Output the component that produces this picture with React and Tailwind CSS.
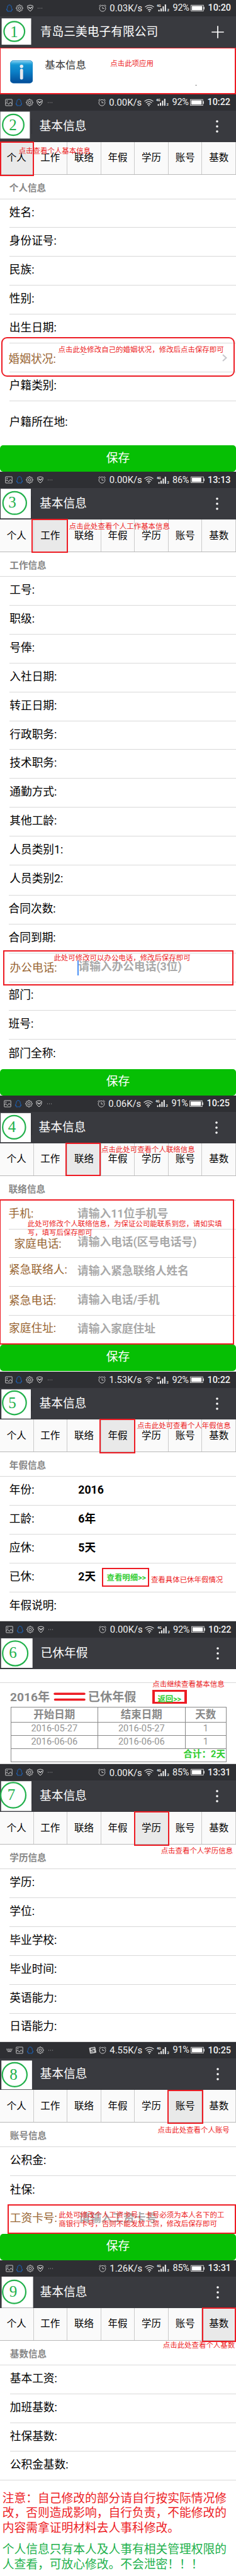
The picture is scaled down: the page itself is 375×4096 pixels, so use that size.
import React from "react";

const TABS = ["个人", "工作", "联络", "年假", "学历", "账号", "基数"];
const SERIF = "font-['Liberation_Serif','Noto_Sans_CJK_SC',serif]";

/* ---------- status bar icons ---------- */

function PictureIcon() {
  return (
    <svg className="h-3 w-3 shrink-0" viewBox="0 0 12 12" fill="none" stroke="#e8e8e8" strokeWidth="0.8">
      <rect x="0.8" y="1" width="10.4" height="10" rx="0.4" />
      <circle cx="3.4" cy="3.6" r="0.7" fill="#e8e8e8" strokeWidth="0.3" />
      <path d="M1 7.6 3.2 6l2.6 3 2.6-3.6L11 8.4" />
    </svg>
  );
}

function PenguinIcon() {
  return (
    <svg className="h-3 w-3 shrink-0" viewBox="0 0 12 12" fill="none" stroke="#1673e6" strokeWidth="0.8" strokeLinejoin="round">
      <path d="M6 .9C4 .9 2.9 2.3 2.9 4.2c0 1.2-.2 1.6-.9 2.7-.6 1-.7 1.9-.5 2.2.3.2.8-.4 1-.6.1.7.4 1.200.8 1.500-.5.2-.8.5-.7.8.2.4 2 .4 2.900 0h1c.9.4 2.700.4 2.900 0 .1-.3-.2-.6-.7-.8.4-.3.7-.8.8-1.500.2.2.7.8 1 .6.2-.3.1-1.200-.5-2.200-.7-1.100-.9-1.500-.9-2.700C9.100 2.300 8 .9 6 .9Z" />
    </svg>
  );
}

function GearIcon() {
  return (
    <svg className="h-3 w-3 shrink-0" viewBox="0 0 24 24" fill="none" stroke="#e8e8e8" strokeWidth="1.6" strokeLinejoin="round">
      <circle cx="12" cy="12" r="4" />
      <path d="M10.400 1.500h3.200l.5 2.600 2 .8 2.200-1.500 2.300 2.300-1.500 2.200.8 2 2.600.5v3.200l-2.600.5-.8 2 1.500 2.200-2.300 2.300-2.200-1.500-2 .8-.5 2.600h-3.200l-.5-2.600-2-.8-2.200 1.500-2.300-2.300 1.500-2.200-.8-2-2.600-.5v-3.200l2.600-.5.8-2-1.500-2.200 2.300-2.300 2.200 1.500 2-.8Z" />
    </svg>
  );
}

function ShieldIcon() {
  return (
    <svg className="h-3 w-3 shrink-0" viewBox="0 0 12 12" fill="none" stroke="#e8e8e8" strokeWidth="0.9" strokeLinejoin="round">
      <path d="M6 1.200c1.500 0 3 .4 4.300 1.100.2 3.600-1.100 6.600-4.300 8.500C2.800 8.900 1.500 5.900 1.700 2.300 3 1.600 4.500 1.200 6 1.200Z" />
      <path d="M3.400 4 6 6.600 8.800 4" strokeWidth="1.200" />
    </svg>
  );
}

function KeyboardIcon() {
  return (
    <svg className="h-3 w-3 shrink-0" viewBox="0 0 12 12" fill="none" stroke="#e8e8e8" strokeWidth="1">
      <path d="M1.200 4.200h9.600M1.600 6h8.800" strokeDasharray="1 .5" />
      <path d="M3 7.900h6" />
    </svg>
  );
}

function DotsIcon() {
  return (
    <svg className="h-3 w-3 shrink-0" viewBox="0 0 12 12" fill="#d8d8d8">
      <circle cx="2.600" cy="6" r="0.500" />
      <circle cx="5.600" cy="6" r="0.500" />
      <circle cx="8.600" cy="6" r="0.500" />
    </svg>
  );
}

function InputMethodIcon() {
  return (
    <svg className="mr-1 h-3 w-3 shrink-0" viewBox="0 0 12 12">
      <path d="M1 2.500 9.800 1 11.500 9.500 2.500 11Z" fill="#d5d5d5" stroke="#d5d5d5" strokeLinejoin="round" />
      <path d="M9.200 3.200C6.500 2.600 3.600 3 3.700 4.600c.1 1.500 4.800.8 4.900 2.400.1 1.600-2.800 2-5.400 1.500" fill="none" stroke="#2e2f33" strokeWidth="1.300" />
    </svg>
  );
}

function AlarmIcon() {
  return (
    <svg className="h-3 w-3 shrink-0" viewBox="0 0 12 12" fill="none" stroke="#e8e8e8" strokeWidth="0.8">
      <circle cx="6" cy="6.300" r="4.900" />
      <path d="M6 3.500v3h2.600M.5 2.900Q1.200 1.200 2.900.7M11.500 2.900Q10.800 1.200 9.100.7" />
    </svg>
  );
}

function WifiIcon() {
  return (
    <svg className="h-3 w-[15px] shrink-0" viewBox="0 0 15 12" fill="none" stroke="#f2f2f2" strokeWidth="1.100">
      <path d="M.5 4.200Q7.500-1.800 14.500 4.200M2.700 6.600Q7.500 2.300 12.300 6.600M4.900 9Q7.500 6.600 10.100 9" />
      <circle cx="7.500" cy="10.700" r="1" fill="#f2f2f2" stroke="none" />
    </svg>
  );
}

function SignalIcon() {
  return (
    <svg className="h-[13px] w-5 shrink-0" viewBox="0 0 20 13" fill="#f2f2f2">
      <text x="0" y="5.200" fontSize="5.400" fontWeight="700" fontFamily="Roboto">4G</text>
      <rect x="2.600" y="9.600" width="2" height="2.600" rx=".6" />
      <rect x="6" y="7.200" width="2" height="5" rx=".6" />
      <rect x="9.400" y="4" width="2" height="8.200" rx=".6" />
      <rect x="12.800" y="1" width="2" height="11.200" rx=".6" />
      <text x="16.400" y="12.300" fontSize="5.800" fontWeight="700" fontFamily="Roboto">2</text>
    </svg>
  );
}

function BatteryIcon({ low }) {
  return (
    <svg className="h-3 w-[22px] shrink-0" viewBox="0 0 22 12">
      <rect x=".6" y="1.200" width="19.600" height="9.400" fill="none" stroke="#f2f2f2" strokeWidth=".8" />
      <rect x="1.900" y="2.500" width={low ? 15 : 16.400} height="6.800" fill="#fff" />
      <rect x="20.300" y="3.800" width="1.500" height="4.200" fill="#f2f2f2" />
    </svg>
  );
}

const LEFT_ICONS = {
  picture: PictureIcon,
  penguin: PenguinIcon,
  gear: GearIcon,
  shield: ShieldIcon,
  keyboard: KeyboardIcon,
  dots: DotsIcon,
};
const DEFAULT_ICONS = ["picture", "penguin", "gear", "shield", "dots"];

function StatusBar({ speed, battery, time, icons = DEFAULT_ICONS, left = "pl-[7.500px]", right = "pr-[8.800px]", ime }) {
  return (
    <div className={`flex h-[26px] shrink-0 items-center justify-between bg-[#2e2f33] text-[#f2f2f2] ${left} ${right}`}>
      <div className="flex items-center gap-[4.600px]">
        {icons.map((name) => {
          const Icon = LEFT_ICONS[name];
          return <Icon key={name} />;
        })}
      </div>
      <div className="flex items-center font-[Roboto,sans-serif] leading-none">
        {ime && <InputMethodIcon />}
        <AlarmIcon />
        <span className="ml-[5.500px] mt-px w-[51.500px] whitespace-nowrap text-[14.800px]">{speed}</span>
        <span className="ml-[3.700px] flex">
          <WifiIcon />
        </span>
        <span className="ml-[4.600px] flex">
          <SignalIcon />
        </span>
        <span className="ml-[5.500px] mt-px w-[26.500px] whitespace-nowrap text-[14.500px] tracking-[-0.300px]">{battery}%</span>
        <span className="ml-[2px] flex">
          <BatteryIcon low={battery < 90} />
        </span>
        <span className="ml-[5.400px] mt-px w-[36px] whitespace-nowrap text-[14.400px] font-medium">{time}</span>
      </div>
    </div>
  );
}

/* ---------- shared building blocks ---------- */

function Badge({ n, box, ring, digit }) {
  return (
    <svg className="absolute left-0 top-0 h-[51px] w-[56px]" viewBox="0 0 56 51">
      <rect x={box[0]} y={box[1]} width={box[2] - box[0]} height={box[3] - box[1]} fill="#fff" />
      <ellipse
        cx={(ring[0] + ring[2]) / 2}
        cy={(ring[1] + ring[3]) / 2}
        rx={(ring[2] - ring[0]) / 2 - 1.1}
        ry={(ring[3] - ring[1]) / 2 - 1.1}
        fill="none"
        stroke="#22b14c"
        strokeWidth="2.200"
      />
      <text x={digit[0]} y={digit[1] + 8.2} textAnchor="middle" fontSize="25" fontFamily="Liberation Serif" fill="#22b14c">
        {n}
      </text>
    </svg>
  );
}

function Header({ title, badge, plus, indent = "pl-[62.500px]", pad = "pr-[24.500px]" }) {
  return (
    <div className={`relative flex h-[50px] shrink-0 items-center justify-between bg-[#393a3f] ${indent} ${pad}`}>
      <span className="absolute left-[49.500px] top-[13px] h-6 w-px bg-[#303136]" />
      <Badge {...badge} />
      <h1 className="whitespace-nowrap text-[18.750px] leading-6 text-white">{title}</h1>
      {plus ? (
        <svg className="h-5 w-5" viewBox="0 0 20 20" stroke="#fff" strokeWidth="1.700">
          <path d="M10 .3v19.400M.3 10h19.400" />
        </svg>
      ) : (
        <svg className="h-6 w-3" viewBox="0 0 12 24" fill="#fff">
          <circle cx="6" cy="4" r="1.800" />
          <circle cx="6" cy="12" r="1.800" />
          <circle cx="6" cy="20" r="1.800" />
        </svg>
      )}
    </div>
  );
}

function Tabs({ active, mark }) {
  return (
    <nav className="relative grid h-[52px] shrink-0 grid-cols-7 border-b border-[#b9b9b9]">
      {TABS.map((t) => (
        <span
          key={t}
          className={`flex items-center justify-center whitespace-nowrap border-r border-[#cbcbcb] text-[15.500px] leading-5 text-black last:border-r-0 ${
            t === active ? "bg-[#e9e9e9]" : "bg-[#fafafa]"
          }`}
        >
          {t}
        </span>
      ))}
      <span className={`absolute border-[2.300px] border-[#ed1c24] ${mark}`} />
    </nav>
  );
}

function SectionTitle({ children, pad = "pl-[14.800px]" }) {
  return (
    <h2 className={`flex h-[39px] shrink-0 items-center border-b border-[#d9d9d9] pt-1 text-[14.600px] font-bold leading-5 text-[#888] ${pad}`}>
      {children}
    </h2>
  );
}

function Row({ label, shift = "", tone = "text-black", value, hint, height = "h-[45.850px]", indent = "ml-[14.800px]", line = true, children }) {
  return (
    <div className={`relative flex shrink-0 items-center pb-[3px] ${line ? "border-b border-[#d9d9d9]" : ""} ${height} ${indent}`}>
      <span className={`w-[109.500px] shrink-0 whitespace-nowrap text-[17.700px] leading-6 ${tone} ${shift}`}>{label}:</span>
      {value && <span className="whitespace-nowrap text-[17.700px] font-bold leading-6 text-black">{value}</span>}
      {hint && <span className="whitespace-nowrap text-[17.700px] font-bold leading-6 text-[#a9a9a9]">{hint}</span>}
      {children}
    </div>
  );
}

function SaveButton() {
  return (
    <button className="h-[42px] w-full shrink-0 rounded-[5px] bg-[#06bf04] text-center text-[18.750px] leading-[39px] text-white">
      保存
    </button>
  );
}

function Note({ at, children }) {
  return (
    <p className={`absolute z-10 whitespace-nowrap text-[11.450px] leading-[14px] text-[#ed1c24] ${SERIF} ${at}`}>{children}</p>
  );
}

function Frame({ at }) {
  return <span className={`absolute border-[2.300px] border-[#ed1c24] ${at}`} />;
}

const BROWN = "text-[#996633]";

/* ---------- screens ---------- */

function AppEntryScreen() {
  return (
    <section className="relative flex h-[149.600px] flex-col">
      <StatusBar speed="0.03K/s" battery={92} time="10:20" icons={["penguin", "gear", "shield", "dots"]} left="pl-[8.500px]" right="pr-[8.500px]" />
      <Header
        title="青岛三美电子有限公司"
        plus
        indent="pl-[63.700px]"
        pad="pr-[19.200px]"
        badge={{ n: 1, box: [2.6, 3.2, 49.5, 45.1], ring: [5.3, 7.3, 40.2, 40.8], digit: [22.5, 24.3] }}
      />
      <div className="-mt-[1.500px] flex flex-1 items-start border-[2.400px] border-l-[1.800px] border-[#ed1c24] bg-white pl-[14.500px] pt-[19.500px]">
        <svg className="h-[36.500px] w-[36.500px]" viewBox="0 0 36 36">
          <defs>
            <linearGradient id="tile" x1="0" y1="0" x2="0" y2="1">
              <stop offset="0" stopColor="#1ba3dc" />
              <stop offset=".5" stopColor="#0b7fc6" />
              <stop offset="1" stopColor="#034c98" />
            </linearGradient>
            <linearGradient id="gloss" x1="0" y1="0" x2="0" y2="1">
              <stop offset="0" stopColor="#8fd3f2" />
              <stop offset="1" stopColor="#1ba0da" stopOpacity="0" />
            </linearGradient>
          </defs>
          <rect x=".3" y=".3" width="35.400" height="35.400" rx="5" fill="url(#tile)" stroke="#0c70b4" strokeWidth=".5" />
          <path d="M1.200 8V5a4 4 0 0 1 4-4h25.600a4 4 0 0 1 4 4v3Q18 5 1.200 8Z" fill="url(#gloss)" />
          <circle cx="18" cy="9.400" r="2.700" fill="#e9eef2" />
          <rect x="15.600" y="13" width="4.800" height="17.200" rx="2.300" fill="#e4e8ee" />
        </svg>
        <span className="ml-[19.300px] mt-[-4.500px] whitespace-nowrap text-[16.400px] leading-6 text-[#333]">基本信息</span>
      </div>
      <Note at="left-[175.300px] top-[93.500px]">点击此项应用</Note>
      <span className="absolute left-[311px] top-[135px] h-px w-px bg-black" />
    </section>
  );
}

function PersonalScreen() {
  return (
    <section className="relative flex h-[600.800px] flex-col">
      <StatusBar speed="0.00K/s" battery={92} time="10:22" right="pr-[9.500px]" />
      <Header title="基本信息" badge={{ n: 2, box: [0.5, 1.5, 47.4, 44.3], ring: [3.1, 4.8, 39, 40.3], digit: [20.6, 22.5] }} />
      <Tabs active="个人" mark="-top-px left-0 h-[55px] w-[53.600px]" />
      <SectionTitle>个人信息</SectionTitle>
      <Row label="姓名" />
      <Row label="身份证号" />
      <Row label="民族" />
      <Row label="性别" />
      <Row label="出生日期" />
      <Row label="婚姻状况" tone={BROWN} shift="relative -left-[1.200px] top-[4px]">
        <svg className="absolute right-[14px] top-[17px] h-3 w-2" viewBox="0 0 8 12" fill="none" stroke="#c7c7cc" strokeWidth="2">
          <path d="M1 1 6.500 6 1 11" />
        </svg>
      </Row>
      <Row label="户籍类别" />
      <Row label="户籍所在地" height="h-[70.800px]" line={false} />
      <SaveButton />
      <Frame at="left-[2.200px] top-[386.700px] h-[62.500px] w-[370.400px] rounded-[9px]" />
      <Note at="left-[29.700px] top-[83.400px]">点击查看个人基本信息</Note>
      <Note at="left-[92.600px] top-[399.400px]">点击此处修改自己的婚姻状况，修改后点击保存即可</Note>
      <span className="absolute left-[130px] top-[413px] h-px w-[3.500px] bg-[#999]" />
    </section>
  );
}

function WorkScreen() {
  const shifted = "ml-[13.600px]";
  return (
    <section className="relative flex h-[991.300px] flex-col">
      <StatusBar speed="0.00K/s" battery={86} time="13:13" left="pl-[8px]" right="pr-[9px]" />
      <Header title="基本信息" indent="pl-[63px]" pad="pr-[24px]" badge={{ n: 3, box: [1, 1.2, 49, 48.2], ring: [3.6, 4.8, 43, 42.8], digit: [19.6, 23.2] }} />
      <Tabs active="工作" mark="-top-px left-[49.500px] h-[54px] w-[58.800px]" />
      <SectionTitle pad="pl-[15.300px]">工作信息</SectionTitle>
      {["工号", "职级", "号俸", "入社日期", "转正日期", "行政职务", "技术职务", "通勤方式", "其他工龄", "人员类别1"].map((l) => (
        <Row key={l} label={l} indent="ml-[15.300px]" />
      ))}
      <Row label="人员类别2" indent="ml-[13.600px]" height="h-[48.200px]" shift="relative left-[1.700px] -top-px" />
      <Row label="合同次数" indent={shifted} />
      <Row label="合同到期" indent={shifted} />
      <Row label="办公电话" indent={shifted} tone={BROWN} shift="relative left-[2px] top-[2px]" hint={<span className="ml-[1.500px]">请输入办公电话(3位)</span>}>
        <span className="absolute left-[109.400px] top-[11px] h-6 w-[2px] bg-[#4a90f5]" />
      </Row>
      <Row label="部门" indent={shifted} />
      <Row label="班号" indent={shifted} />
      <Row label="部门全称" indent={shifted} line={false} height="flex-1" />
      <SaveButton />
      <Frame at="left-[4.800px] top-[761px] h-[55.200px] w-[366.600px]" />
      <Note at="left-[109.800px] top-[80px]">点击此处查看个人工作基本信息</Note>
      <Note at="left-[85.400px] top-[765.900px]">此处可修改可以办公电话，修改后保存即可</Note>
    </section>
  );
}

function ContactScreen() {
  const indent = "ml-[13.600px]";
  return (
    <section className="relative flex h-[439.700px] flex-col">
      <StatusBar speed="0.06K/s" battery={91} time="10:25" left="pl-[6.400px]" right="pr-[10.500px]" />
      <Header title="基本信息" indent="pl-[61.500px]" pad="pr-[25.300px]" badge={{ n: 4, box: [1, 1.9, 49, 48.2], ring: [3.1, 4.8, 41.6, 44], digit: [19.1, 24] }} />
      <Tabs active="联络" mark="-top-px left-[103.600px] h-[53px] w-[56.400px]" />
      <SectionTitle pad="pl-[13.700px]">联络信息</SectionTitle>
      <Row label="手机" indent={indent} tone={BROWN} hint="请输入11位手机号" />
      <Row label="家庭电话" indent={indent} tone={BROWN} shift="relative left-[9px] top-[3px]" hint="请输入电话(区号电话号)" />
      <Row label="紧急联络人" indent={indent} tone={BROWN} shift="relative -top-[2px] left-[.5px]" hint="请输入紧急联络人姓名" />
      <Row label="紧急电话" indent={indent} tone={BROWN} shift="relative top-px left-[.5px]" hint="请输入电话/手机" />
      <Row label="家庭住址" indent={indent} tone={BROWN} shift="relative -top-px left-[.5px]" hint="请输入家庭住址" line={false} height="flex-1" />
      <SaveButton />
      <span className="h-[1.500px] shrink-0" />
      <Frame at="left-0 top-[165.200px] h-[231px] w-[371.900px] border-l-[1px]" />
      <Note at="left-[161px] top-[79.200px]">点击此处可查看个人联络信息</Note>
      <Note at="left-[43.800px] top-[197.100px]">
        此处可修改个人联络信息，为保证公司能联系到您，请如实填
        <br />
        写，填写后保存即可
      </Note>
    </section>
  );
}

function LeaveScreen() {
  return (
    <section className="relative flex h-[396.900px] flex-col border-b border-[#d9d9d9]">
      <StatusBar speed="1.53K/s" battery={92} time="10:22" right="pr-[9.500px]" />
      <Header title="基本信息" badge={{ n: 5, box: [2.2, 2.2, 49, 48.7], ring: [3.1, 3.8, 42.8, 43.4], digit: [19.6, 23.7] }} />
      <Tabs active="年假" mark="-top-[1.500px] left-[157.800px] h-[55px] w-[57.200px]" />
      <SectionTitle>年假信息</SectionTitle>
      <Row label="年份" value="2016" />
      <Row label="工龄" value="6年" />
      <Row label="应休" value="5天" />
      <Row label="已休" value="2天">
        <span className="absolute left-[154.800px] top-[13px] whitespace-nowrap text-[12.400px] font-bold leading-5 text-[#32cd32]">查看明细&gt;&gt;</span>
        <Frame at="left-[147.100px] top-[7px] h-[30px] w-[75.600px]" />
      </Row>
      <Row label="年假说明" line={false} height="flex-1" />
      <Note at="left-[217.900px] top-[78.900px]">点击此处可查看个人年假信息</Note>
      <Note at="left-[239.900px] top-[324.100px]">查看具体已休年假情况</Note>
    </section>
  );
}

function LeaveDetailScreen() {
  const cell = "border border-[#888]";
  return (
    <section className="relative flex h-[227.200px] flex-col border-b border-[#d9d9d9]">
      <StatusBar speed="0.00K/s" battery={92} time="10:22" left="pl-[9px]" right="pr-[8px]" />
      <Header title="已休年假" indent="pl-[64.500px]" pad="pr-[22.600px]" badge={{ n: 6, box: [1.7, 1.1, 51.7, 48], ring: [3.1, 4.2, 45.2, 45.7], digit: [20.6, 24] }} />
      <div className="h-[21.500px] shrink-0 border-b border-[#d9d9d9]" />
      <div className="flex h-[38.500px] shrink-0 items-center pl-[16px] pt-[8px] text-[19.200px] font-bold leading-6 text-[#888]">
        <span className="w-[68.500px] whitespace-nowrap">2016年</span>
        <svg className="h-4 w-[51px]" viewBox="0 0 51 16" stroke="#ed1c24" strokeWidth="3.600" strokeLinecap="round">
          <path d="M2 2.300h47M2.500 11.500h46.500" />
        </svg>
        <span className="ml-[4.300px] whitespace-nowrap">已休年假</span>
      </div>
      <table className="ml-[16.500px] w-[343.500px] table-fixed border-collapse text-center leading-none text-[#888]">
        <colgroup>
          <col className="w-[138.500px]" />
          <col className="w-[138.500px]" />
          <col />
        </colgroup>
        <thead>
          <tr className="h-6 text-[16.500px]">
            <th className={cell}>开始日期</th>
            <th className={cell}>结束日期</th>
            <th className={cell}>天数</th>
          </tr>
        </thead>
        <tbody className="text-[14.600px] text-[#949494]">
          <tr className="h-[21px]">
            <td className={`${cell} pb-0.5`}>2016-05-27</td>
            <td className={`${cell} pb-0.5`}>2016-05-27</td>
            <td className={`${cell} pb-0.5`}>1</td>
          </tr>
          <tr className="h-[21px]">
            <td className={`${cell} pb-0.5`}>2016-06-06</td>
            <td className={`${cell} pb-0.5`}>2016-06-06</td>
            <td className={`${cell} pb-0.5`}>1</td>
          </tr>
          <tr className="h-[21px]">
            <td colSpan={3} className={`${cell} pb-[3px] pr-px text-right font-bold text-[#32cd32]`}>合计：2天</td>
          </tr>
        </tbody>
      </table>
      <Frame at="left-[242.300px] top-[108.800px] h-[21.700px] w-[55.200px] border-x-[4px] border-y-[3px]" />
      <span className="absolute left-[250.400px] top-[114px] whitespace-nowrap text-[12.400px] font-bold leading-5 text-[#32cd32]">返回&gt;&gt;</span>
      <Note at="left-[242.300px] top-[92.700px]">点击继续查看基本信息</Note>
    </section>
  );
}

function EducationScreen() {
  return (
    <section className="relative flex h-[441.800px] flex-col border-b border-[#d9d9d9]">
      <StatusBar speed="0.00K/s" battery={85} time="13:31" left="pl-[8px]" right="pr-[9px]" />
      <Header title="基本信息" indent="pl-[63px]" pad="pr-[24px]" badge={{ n: 7, box: [1.7, 1.2, 50, 48.6], ring: [0, 2.3, 42.1, 44.7], digit: [17.9, 22.3] }} />
      <Tabs active="学历" mark="-top-[1.500px] left-[212.600px] h-[55.500px] w-[56.200px]" />
      <SectionTitle pad="pl-[15.300px]">学历信息</SectionTitle>
      {["学历", "学位", "毕业学校", "毕业时间", "英语能力"].map((l) => (
        <Row key={l} label={l} indent="ml-[15.300px]" />
      ))}
      <Row label="日语能力" indent="ml-[15.300px]" line={false} height="flex-1" />
      <Note at="left-[255.700px] top-[130.900px]">点击查看个人学历信息</Note>
    </section>
  );
}

function AccountScreen() {
  return (
    <section className="relative flex h-[346.700px] flex-col">
      <StatusBar
        speed="4.55K/s"
        battery={91}
        time="10:25"
        icons={["keyboard", "picture", "penguin", "gear", "dots"]}
        left="pl-[8.500px]"
        right="pr-[8.500px]"
        ime
      />
      <Header title="基本信息" indent="pl-[63.500px]" pad="pr-[23.200px]" badge={{ n: 8, box: [2.2, 3.4, 50.9, 49.2], ring: [2.6, 5.8, 44, 45.9], digit: [21.5, 25.3] }} />
      <Tabs active="账号" mark="-top-[.5px] left-[266.200px] h-[54.700px] w-[57.100px]" />
      <SectionTitle pad="pl-[15.800px]">账号信息</SectionTitle>
      <Row label="公积金" indent="ml-[15.800px]" />
      <Row label="社保" indent="ml-[15.800px]" line={false} />
      <Row label="工资卡号" indent="ml-[15.800px]" tone={BROWN} hint="请输入工资卡号" line={false} height="flex-1" />
      <SaveButton />
      <Frame at="left-[11.500px] top-[258.100px] h-[47px] w-[363.500px]" />
      <Note at="left-[250.400px] top-[133.100px]">点击此处查看个人账号</Note>
      <Note at="left-[93.300px] top-[267.800px]">
        此处可修改个人工资卡号，卡号必须为本人名下的工
        <br />
        商银行卡号，否则不能发放工资，修改后保存即可
      </Note>
    </section>
  );
}

function BaseScreen() {
  return (
    <section className="relative flex h-[350.200px] flex-col border-b border-[#d9d9d9]">
      <StatusBar speed="1.26K/s" battery={85} time="13:31" left="pl-[8.500px]" right="pr-[8.500px]" />
      <Header title="基本信息" indent="pl-[63.500px]" pad="pr-[23.200px]" badge={{ n: 9, box: [2.6, 0, 52.6, 49.6], ring: [3.1, 4.7, 42.1, 43.8], digit: [21, 24] }} />
      <Tabs active="基数" mark="-top-px left-[321.400px] h-[55px] w-[53.600px]" />
      <SectionTitle pad="pl-[15.800px]">基数信息</SectionTitle>
      {["基本工资", "加班基数", "社保基数"].map((l) => (
        <Row key={l} label={l} indent="ml-[15.800px]" />
      ))}
      <Row label="公积金基数" indent="ml-[15.800px]" line={false} height="flex-1" />
      <Note at="left-[258.800px] top-[127.800px]">点击此处查看个人基数</Note>
    </section>
  );
}

export default function App() {
  return (
    <main className="h-[4096px] w-[375px] overflow-hidden bg-white font-[Roboto,'Noto_Sans_CJK_SC',sans-serif] text-black">
      <AppEntryScreen />
      <PersonalScreen />
      <WorkScreen />
      <ContactScreen />
      <LeaveScreen />
      <LeaveDetailScreen />
      <EducationScreen />
      <AccountScreen />
      <BaseScreen />
      <footer className={`whitespace-nowrap pl-[3.800px] pt-[16.500px] text-[18.750px] leading-[23.500px] ${SERIF}`}>
        <p className="text-[#ed1c24]">
          注意：自己修改的部分请自行按实际情况修
          <br />
          改，否则造成影响，自行负责，不能修改的
          <br />
          内容需拿证明材料去人事科修改。
        </p>
        <p className="mt-[11px] text-[#22b14c]">
          个人信息只有本人及人事有相关管理权限的
          <br />
          人查看，可放心修改。不会泄密！！！
        </p>
      </footer>
    </main>
  );
}
